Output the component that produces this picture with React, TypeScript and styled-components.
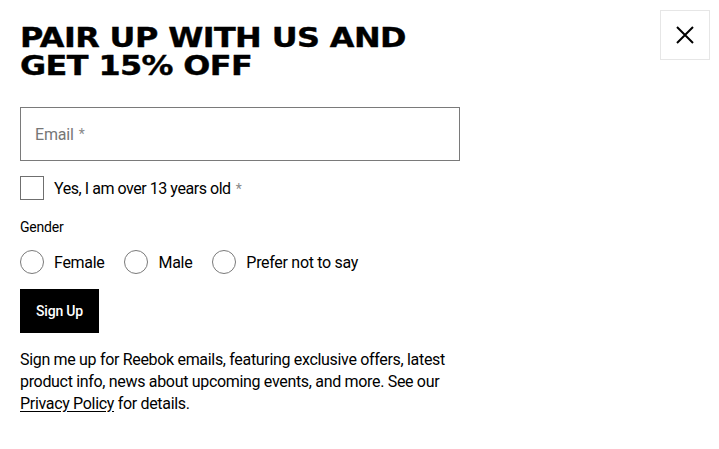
import React from "react";
import styled, { createGlobalStyle } from "styled-components";

const Global = createGlobalStyle`
  html, body { margin: 0; padding: 0; background: #fff; overflow: hidden; }
  body { font-family: Roboto, "Liberation Sans", sans-serif; color: #000; }
  * { box-sizing: border-box; }
`;

const Page = styled.div`
  position: relative;
  width: 719px;
  height: 449px;
  padding: 20px 20px 0 20px;
  display: flex;
  flex-direction: column;
`;

const CloseButton = styled.button`
  position: absolute;
  top: 10px;
  right: 9px;
  width: 50px;
  height: 50px;
  border: 1px solid #e6e6e6;
  background: #fff;
  display: flex;
  align-items: center;
  justify-content: center;
  padding: 0;
`;

const Title = styled.h1`
  align-self: flex-start;
  margin: 0;
  margin-top: 4px;
  font-family: "DejaVu Sans", sans-serif;
  font-weight: 700;
  font-size: 27px;
  line-height: 28px;
  letter-spacing: -0.5px;
  text-transform: uppercase;
  transform: scaleX(1.18);
  transform-origin: left top;
  -webkit-text-stroke: 0.4px #000;
`;

const EmailBox = styled.div`
  margin-top: 27px;
  width: 440px;
  height: 54px;
  border: 1px solid #7a7a7a;
  display: flex;
  align-items: center;
  padding-left: 14px;
  font-size: 16px;
  color: #767676;
  letter-spacing: -0.2px;
`;

const Star = styled.span`
  color: #8a8a8a;
  margin-left: 5px;
  font-size: 14px;
`;

const CheckRow = styled.label`
  margin-top: 15px;
  display: flex;
  align-items: center;
  gap: 10px;
  font-size: 16px;
  letter-spacing: -0.45px;
`;

const Box = styled.span`
  width: 24px;
  height: 24px;
  border: 1px solid #6f6f6f;
  flex: none;
`;

const GenderLabel = styled.div`
  margin-top: 19px;
  font-size: 14px;
  letter-spacing: -0.2px;
`;

const RadioGroup = styled.div`
  margin-top: 15px;
  display: flex;
  align-items: center;
  gap: 20px;
`;

const RadioOption = styled.label`
  display: flex;
  align-items: center;
  gap: 10px;
  font-size: 16px;
  letter-spacing: -0.3px;
`;

const Circle = styled.span`
  width: 24px;
  height: 24px;
  border-radius: 50%;
  border: 1px solid #7a7a7a;
  flex: none;
`;

const SignUp = styled.button`
  margin-top: 15px;
  align-self: flex-start;
  width: 79px;
  height: 44px;
  background: #000;
  color: #fff;
  border: none;
  font-family: Roboto, "Liberation Sans", sans-serif;
  font-weight: 500;
  font-size: 14px;
  letter-spacing: -0.2px;
  padding: 0;
`;

const Legal = styled.p`
  margin: 16px 0 0 0;
  width: 440px;
  font-size: 16px;
  line-height: 22px;
  letter-spacing: -0.32px;
`;

const Link = styled.a`
  color: #000;
  text-decoration: underline;
  text-underline-offset: 2px;
`;

export default function App() {
  return (
    <>
      <Global />
      <Page>
        <CloseButton aria-label="Close">
          <svg width="18" height="18" viewBox="0 0 18 18" fill="none" stroke="#000" strokeWidth="2">
            <path d="M1 1L17 17M17 1L1 17" />
          </svg>
        </CloseButton>
        <Title>
          Pair up with us and
          <br />
          get 15% off
        </Title>
        <EmailBox>
          Email<Star>*</Star>
        </EmailBox>
        <CheckRow>
          <Box />
          <span>
            Yes, I am over 13 years old<Star>*</Star>
          </span>
        </CheckRow>
        <GenderLabel>Gender</GenderLabel>
        <RadioGroup>
          <RadioOption>
            <Circle />
            Female
          </RadioOption>
          <RadioOption>
            <Circle />
            Male
          </RadioOption>
          <RadioOption>
            <Circle />
            Prefer not to say
          </RadioOption>
        </RadioGroup>
        <SignUp>Sign Up</SignUp>
        <Legal>
          Sign me up for Reebok emails, featuring exclusive offers, latest product info, news about upcoming
          events, and more. See our <Link href="#">Privacy Policy</Link> for details.
        </Legal>
      </Page>
    </>
  );
}
